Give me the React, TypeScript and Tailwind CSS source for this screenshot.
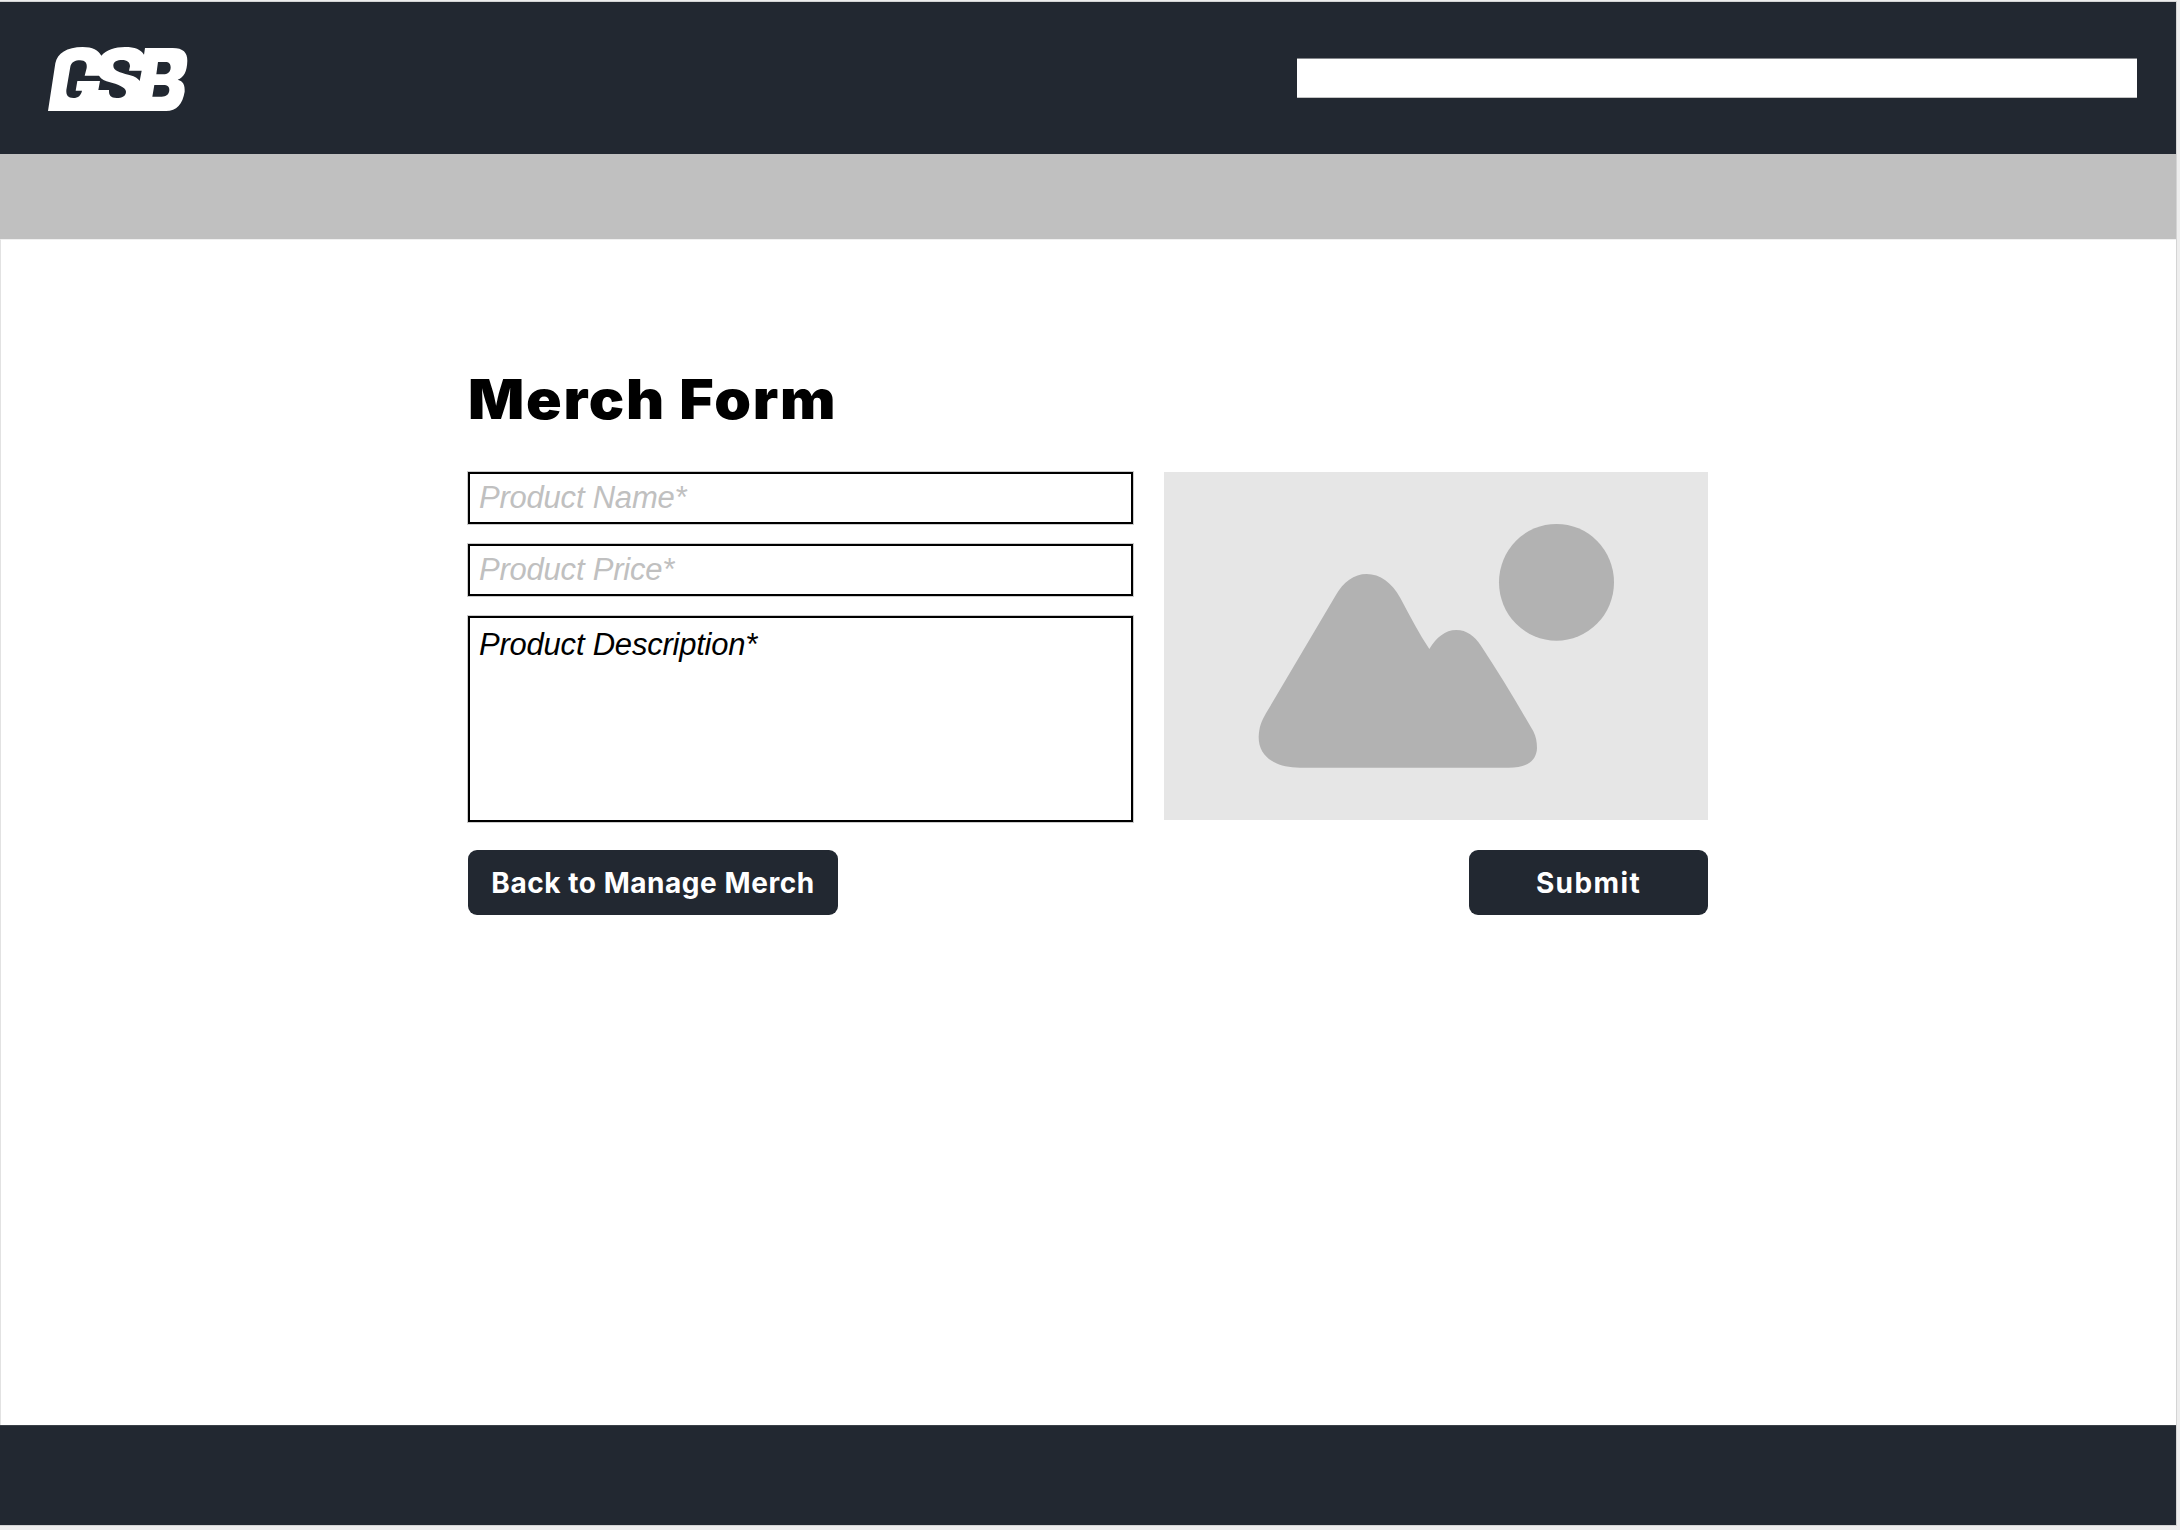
function Logo() {
  return (
    <svg className="h-16 w-[140px]" viewBox="144 141 420 192" role="img" aria-label="GSB">
      <path
        fill="#fff"
        fillRule="evenodd"
        d="M144 333L166 190C172 160 200 141 248 141C278 141 295 150 304 167C318 150 345 141 375 141C405 141 422 148 432 164L435 144H518C550 144 562 158 562 182C561 215 552 232 533 239C550 243 555 255 554 275C548 312 530 333 498 333Z
        M211 200C214 186 226 181 240 181C256 181 262 190 260 204L254 227H297C304 238 315 243 330 247C350 252 378 262 378 275C378 288 366 294 350 294C332 294 326 286 327 270H295L300 243H232L227 272H246C243 286 235 294 220 294C204 294 198 286 199 270Z
        M340 197C340 184 352 180 366 180C382 180 390 187 390 199L387 212H425L419 243C412 232 400 228 385 224C360 217 340 212 340 197Z
        M474 186H495C508 186 512 192 512 203C511 217 502 223 490 223H469Z
        M463 255H490C503 255 508 260 508 270C507 284 498 290 485 290H457Z"
      />
    </svg>
  );
}

function ImagePlaceholder() {
  return (
    <svg className="h-[348px] w-[544px] bg-[#e6e6e6]" viewBox="1164 472 544 348">
      <ellipse cx="1556.5" cy="582.3" rx="57.5" ry="58.4" fill="#b2b2b2" />
      <g transform="translate(1220 520) scale(.33333)">
        <path
          fill="#b2b2b2"
          d="M138 580L346 228C370 185 402 162 440 162C480 162 516 188 541 234C571 290 597 341 628 387C650 352 675 330 709 330C740 330 764 348 782 376C837 460 888 543 940 634C948 650 951 665 951 685C949 724 920 743 866 743H240C165 743 116 710 116 652C117 622 124 604 138 580Z"
        />
      </g>
    </svg>
  );
}

const field =
  "block w-full border-2 border-black bg-white pl-[9px] font-['Liberation_Sans',Arial,sans-serif] text-[31px] tracking-[-0.22px] italic outline outline-1 outline-[#cccccc] resize-none";
const button =
  "h-[65px] rounded-[9px] bg-[#222831] pt-px font-['Inter',sans-serif] text-[28px] font-bold leading-[64px] text-white whitespace-nowrap";

export default function App() {
  return (
    <div className="h-[1530px] w-[2180px] bg-[#eeeeee] pt-px">
      <div className="flex h-[1525px] w-[2177px] flex-col border-y border-r border-[#d4d4d4] bg-white">
        <header className="flex h-[152px] shrink-0 items-start justify-between bg-[#222831] pl-12 pr-[39px]">
          <div className="pt-[45px]">
            <Logo />
          </div>
          <div className="mt-14 h-10 w-[840px] border-b border-t border-b-[#c4c4c4] border-t-[#85878c] bg-white" />
        </header>
        <nav className="h-[85px] shrink-0 bg-[#c0c0c0]" />
        <main className="flex grow flex-col border-l border-t border-l-[#e2e2e2] border-t-[#f0f0f0] pl-[467px] pt-[127px]">
          <h1 className="h-[105px] w-[400px] origin-left scale-x-[1.07] whitespace-nowrap font-['Inter',sans-serif] text-[55px] font-black leading-[64px] tracking-[1.6px]">
            Merch Form
          </h1>
          <form className="w-[1240px]">
            <div className="flex h-[350px] justify-between">
              <div className="flex w-[665px] flex-col gap-5">
                <input className={`${field} h-[52px] placeholder:text-[#c0c0c0]`} placeholder="Product Name*" />
                <input className={`${field} h-[52px] placeholder:text-[#c0c0c0]`} placeholder="Product Price*" />
                <textarea className={`${field} h-[206px] pt-[9px] leading-[36px] placeholder:text-black`} placeholder="Product Description*" />
              </div>
              <ImagePlaceholder />
            </div>
            <div className="mt-7 flex justify-between">
              <button type="button" className={`${button} w-[370px] tracking-[0.55px]`}>Back to Manage Merch</button>
              <button type="button" className={`${button} w-[239px] tracking-[1.4px]`}>Submit</button>
            </div>
          </form>
        </main>
        <footer className="h-[100px] shrink-0 border-t border-[#3a4047] bg-[#222831]" />
      </div>
    </div>
  );
}
